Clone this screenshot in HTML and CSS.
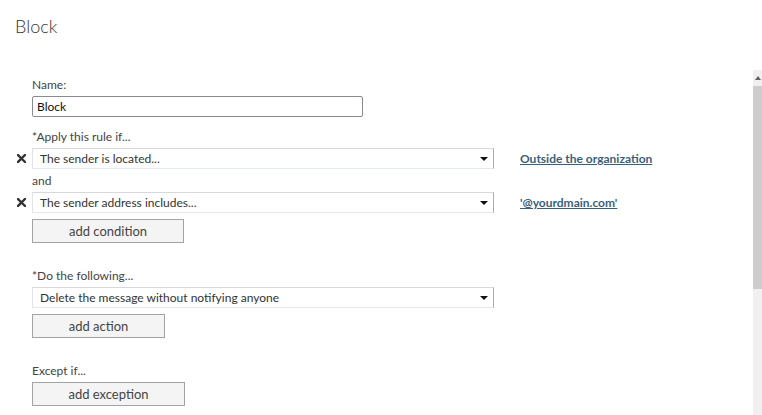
FILE: index.html
```html
<!DOCTYPE html>
<html lang="en">
<head>
  <meta charset="UTF-8">
  <title>Block</title>
  <link rel="stylesheet" href="styles.css">
</head>
<body>
  <h1 class="title">Block</h1>

  <div class="pane">
    <div class="rule-form">
      <div class="label">Name:</div>
      <div class="row">
        <span class="remove"></span>
        <input class="text-box" type="text" value="Block">
      </div>

      <div class="label gap-small">*Apply this rule if...</div>
      <div class="row">
        <span class="remove">
          <svg width="9" height="9" viewBox="0 0 9 9"><path d="M1 1 L8 8 M8 1 L1 8" stroke="#333" stroke-width="2.4" stroke-linecap="square"/></svg>
        </span>
        <div class="select">The sender is located...</div>
        <a class="value-link" href="#">Outside the organization</a>
      </div>
      <div class="label gap-tiny">and</div>
      <div class="row">
        <span class="remove">
          <svg width="9" height="9" viewBox="0 0 9 9"><path d="M1 1 L8 8 M8 1 L1 8" stroke="#333" stroke-width="2.4" stroke-linecap="square"/></svg>
        </span>
        <div class="select">The sender address includes...</div>
        <a class="value-link" href="#">'@yourdmain.com'</a>
      </div>
      <div class="row">
        <span class="remove"></span>
        <button class="add-btn btn-condition">add condition</button>
      </div>

      <div class="label gap-big">*Do the following...</div>
      <div class="row">
        <span class="remove"></span>
        <div class="select">Delete the message without notifying anyone</div>
      </div>
      <div class="row">
        <span class="remove"></span>
        <button class="add-btn btn-action">add action</button>
      </div>

      <div class="label gap-big">Except if...</div>
      <div class="row">
        <span class="remove"></span>
        <button class="add-btn btn-exception">add exception</button>
      </div>
    </div>

    <!-- vertical scrollbar -->
    <div class="scrollbar">
      <div class="scroll-arrow"></div>
      <div class="scroll-thumb"></div>
    </div>
  </div>
</body>
</html>
```

FILE: styles.css
```css
body {
  margin: 0;
  background: #fff;
  font-family: Lato, "Liberation Sans", sans-serif;
  font-size: 12px;
  color: #444;
  height: 415px;
  overflow: hidden;
}

.title {
  margin: 0;
  padding: 15px 0 0 15px;
  height: 70px;
  box-sizing: border-box;
  font-size: 18px;
  font-weight: 300;
  color: #333;
}

/* content pane with its scrollbar */
.pane {
  display: flex;
  height: 345px;
}

.rule-form {
  flex: 1;
  padding: 7px 0 0 17px;
}

.label {
  height: 16px;
  line-height: 16px;
  margin-bottom: 3px;
  padding-left: 15px;
  color: #444;
}

.gap-small { margin-top: 12px; }
.gap-tiny  { margin-top: 4px; }
.gap-big   { margin-top: 25px; }

.row {
  display: flex;
  align-items: center;
}

.remove {
  width: 15px;
  display: flex;
  align-items: center;
}

.text-box {
  width: 331px;
  height: 21px;
  box-sizing: border-box;
  border: 1px solid #8a8a95;
  border-radius: 2px;
  padding: 0 4px;
  font-family: inherit;
  font-size: 12px;
  color: #111;
  margin: 0;
}

.select {
  position: relative;
  width: 462px;
  height: 21px;
  box-sizing: border-box;
  line-height: 19px;
  padding-left: 7px;
  color: #333;
  border-top: 1px solid #d6d8dd;
  border-left: 1px solid #e2e3ea;
  border-right: 1px solid #ababab;
  border-bottom: 1px solid #e3e9ef;
}

.select::after {
  content: "";
  position: absolute;
  right: 5px;
  top: 8px;
  border-left: 4px solid transparent;
  border-right: 4px solid transparent;
  border-top: 4px solid #111;
}

.value-link {
  margin-left: 26px;
  color: #3a5f7c;
  font-weight: bold;
  text-decoration: underline;
}

.add-btn {
  height: 24px;
  margin: 6px 0 0;
  padding: 0;
  border: 1px solid #a3a3a3;
  background: #f4f4f4;
  font-family: inherit;
  font-size: 13px;
  color: #444;
}

.btn-condition { width: 152px; }
.btn-action { width: 133px; }
.btn-exception { width: 153px; margin-top: 0; }

.scrollbar {
  width: 9px;
  display: flex;
  flex-direction: column;
  background: #f0f0f0;
}

.scroll-arrow {
  height: 16px;
  background: #f0f0f0;
  position: relative;
}

.scroll-arrow::after {
  content: "";
  position: absolute;
  left: 2px;
  top: 6px;
  border-left: 3px solid transparent;
  border-right: 3px solid transparent;
  border-bottom: 4px solid #606060;
}

.scroll-thumb {
  height: 203px;
  background: #cdcdcd;
}
```
